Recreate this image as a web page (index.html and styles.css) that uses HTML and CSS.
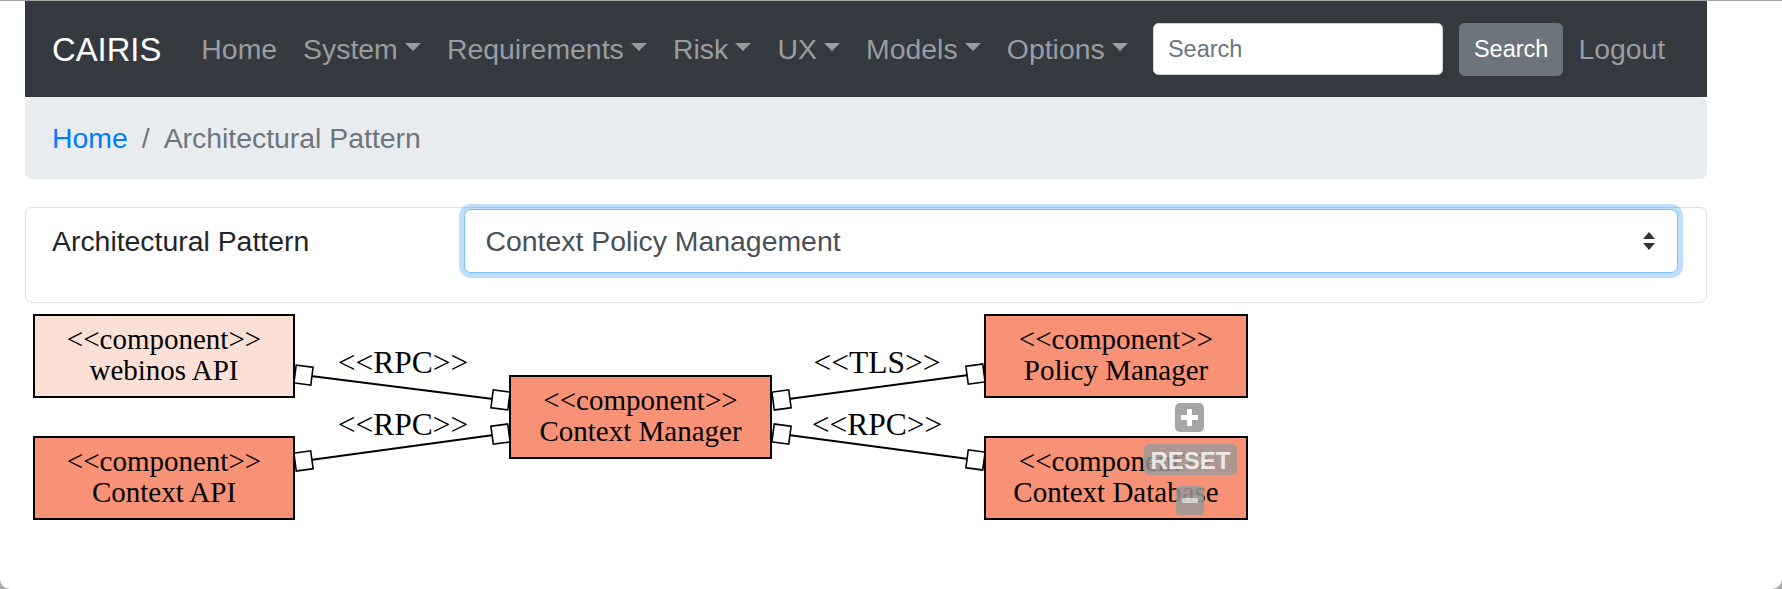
FILE: index.html
```html
<!DOCTYPE html>
<html lang="en">
<head>
<meta charset="utf-8">
<title>CAIRIS - Architectural Pattern</title>
<link rel="stylesheet" href="styles.css">
</head>
<body>
<div class="page">
  <nav class="navbar">
    <a class="brand">CAIRIS</a>
    <ul class="nav">
      <li class="nav-link">Home</li>
      <li class="nav-link dropdown">System</li>
      <li class="nav-link dropdown">Requirements</li>
      <li class="nav-link dropdown">Risk</li>
      <li class="nav-link dropdown">UX</li>
      <li class="nav-link dropdown">Models</li>
      <li class="nav-link dropdown">Options</li>
    </ul>
    <form class="search">
      <input class="search-input" type="text" placeholder="Search">
      <button class="btn" type="button">Search</button>
    </form>
    <a class="nav-link logout">Logout</a>
  </nav>

  <ol class="breadcrumb">
    <li class="crumb"><a class="crumb-link">Home</a></li>
    <li class="crumb active">Architectural Pattern</li>
  </ol>

  <div class="card">
    <label class="field-label">Architectural Pattern</label>
    <div class="select-wrap">
      <select class="select">
        <option>Context Policy Management</option>
      </select>
      <svg class="select-arrow" width="14" height="18" viewBox="0 0 14 18">
        <path d="M7 0 L13 7 L1 7 Z" fill="#333"/>
        <path d="M1 11 L13 11 L7 18 Z" fill="#333"/>
      </svg>
    </div>
  </div>

  <svg class="diagram" width="1250" height="240" viewBox="0 0 1250 240">
    <g class="edges" stroke="#000" stroke-width="2" fill="none">
      <line x1="278" y1="71" x2="476" y2="96"/>
      <line x1="278" y1="157" x2="476" y2="130"/>
      <line x1="756" y1="96" x2="951" y2="70"/>
      <line x1="756" y1="130" x2="951" y2="156"/>
    </g>
    <g class="labels" font-family="'Liberation Serif', 'Times New Roman', serif" font-size="31.5" text-anchor="middle" fill="#000">
      <text x="378" y="69">&lt;&lt;RPC&gt;&gt;</text>
      <text x="378" y="131">&lt;&lt;RPC&gt;&gt;</text>
      <text x="852" y="69">&lt;&lt;TLS&gt;&gt;</text>
      <text x="852" y="131">&lt;&lt;RPC&gt;&gt;</text>
    </g>
    <g class="nodes" stroke="#000" stroke-width="2">
      <rect x="9" y="11" width="260" height="82" fill="#fde0d5"/>
      <rect x="9" y="133" width="260" height="82" fill="#f89276"/>
      <rect x="485" y="72" width="261" height="82" fill="#f89276"/>
      <rect x="960" y="11" width="262" height="82" fill="#f89276"/>
      <rect x="960" y="133" width="262" height="82" fill="#f89276"/>
    </g>
    <g class="ports" fill="#fff" stroke="#000" stroke-width="1.6">
      <rect x="-8" y="-9" width="17" height="18" transform="translate(278 71) rotate(7.2)"/>
      <rect x="-8" y="-9" width="17" height="18" transform="translate(278 157) rotate(-7.8)"/>
      <rect x="-9" y="-9" width="17" height="18" transform="translate(476 96) rotate(7.2)"/>
      <rect x="-9" y="-9" width="17" height="18" transform="translate(476 130) rotate(-7.8)"/>
      <rect x="-8" y="-9" width="17" height="18" transform="translate(756 96) rotate(-7.6)"/>
      <rect x="-8" y="-9" width="17" height="18" transform="translate(756 130) rotate(7.6)"/>
      <rect x="-9" y="-9" width="17" height="18" transform="translate(951 70) rotate(-7.6)"/>
      <rect x="-9" y="-9" width="17" height="18" transform="translate(951 156) rotate(7.6)"/>
    </g>
    <g class="node-text" font-family="'Liberation Serif', 'Times New Roman', serif" font-size="29" text-anchor="middle" fill="#000">
      <text x="139" y="45">&lt;&lt;component&gt;&gt;</text>
      <text x="139" y="76">webinos API</text>
      <text x="139" y="167">&lt;&lt;component&gt;&gt;</text>
      <text x="139" y="198">Context API</text>
      <text x="615.5" y="106">&lt;&lt;component&gt;&gt;</text>
      <text x="615.5" y="137">Context Manager</text>
      <text x="1091" y="45">&lt;&lt;component&gt;&gt;</text>
      <text x="1091" y="76">Policy Manager</text>
      <text x="1091" y="167">&lt;&lt;component&gt;&gt;</text>
      <text x="1091" y="198">Context Database</text>
    </g>
    <g class="controls">
      <rect x="1150" y="99" width="29" height="29" rx="5" fill="#a6a6a6"/>
      <path d="M1164.5 105 V122 M1156 113.5 H1173" stroke="#fff" stroke-width="5"/>
      <rect x="1119" y="140" width="93" height="31" rx="5" fill="#999" fill-opacity="0.8"/>
      <text x="1165.5" y="165" text-anchor="middle" font-family="'Liberation Sans', Arial, sans-serif" font-weight="bold" font-size="24" fill="#fff" fill-opacity="0.8">RESET</text>
      <rect x="1151" y="182" width="28" height="29" rx="4" fill="#999" fill-opacity="0.85"/>
      <rect x="1157" y="194" width="16" height="5" rx="1.5" fill="#fff" fill-opacity="0.6"/>
    </g>
  </svg>
</div>
</body>
</html>
```

FILE: styles.css
```css
html {
  background: #a8a8a8;
}

body {
  margin: 0;
  min-height: 100vh;
  box-sizing: border-box;
  border-top: 1px solid #a3a3a3;
  border-radius: 0 0 10px 10px;
  background: #fff;
  font-family: "Liberation Sans", Arial, Helvetica, sans-serif;
  font-size: 28.4px;
  line-height: 41px;
  color: #212529;
}

.page {
  width: 1682px;
  margin-left: 25px;
}

/* Navbar */
.navbar {
  display: flex;
  align-items: center;
  height: 96px;
  padding: 0 27px;
  background: #343a40;
}

.brand {
  font-size: 32.8px;
  color: #fff;
  margin-right: 27px;
}

.nav {
  display: flex;
  list-style: none;
  margin: 0;
  padding: 0;
}

.nav-link {
  padding: 0 13px;
  color: #9a9da0;
}

.dropdown::after {
  content: "";
  display: inline-block;
  margin-left: 0.255em;
  vertical-align: 0.255em;
  border-top: 0.3em solid;
  border-right: 0.3em solid transparent;
  border-left: 0.3em solid transparent;
}

.search {
  display: flex;
  align-items: center;
  margin: 0 0 0 12px;
}

.search-input {
  width: 290px;
  height: 52px;
  box-sizing: border-box;
  padding: 0 14px;
  font-family: "Liberation Sans", Arial, sans-serif;
  font-size: 23.5px;
  color: #495057;
  background: #fff;
  border: 1px solid #ced4da;
  border-radius: 5.5px;
}

.search-input::placeholder {
  color: #6c757d;
}

.btn {
  margin-left: 16px;
  height: 53px;
  padding: 0 14px;
  font-family: "Liberation Sans", Arial, sans-serif;
  font-size: 23.5px;
  color: #fff;
  background: #6c757d;
  border: 1px solid #6c757d;
  border-radius: 5.5px;
}

.logout {
  margin-left: 2px;
}

/* Breadcrumb */
.breadcrumb {
  display: flex;
  list-style: none;
  margin: 0;
  padding: 20.5px 27px;
  background: #e9ecef;
  border-radius: 7px;
}

.crumb-link {
  color: #007bff;
}

.crumb + .crumb {
  padding-left: 14px;
}

.crumb + .crumb::before {
  content: "/";
  padding-right: 14px;
  color: #6c757d;
}

.crumb.active {
  color: #6c757d;
}

/* Card */
.card {
  display: grid;
  grid-template-columns: 412px 1fr;
  align-items: center;
  margin-top: 28px;
  padding: 1px 28px 29px 26px;
  border: 1px solid rgba(0, 0, 0, 0.125);
  border-radius: 7px;
}

.field-label {
  color: #212529;
}

.select-wrap {
  position: relative;
}

.select {
  display: block;
  width: 100%;
  height: 64px;
  box-sizing: border-box;
  padding: 0 20.5px;
  font-family: "Liberation Sans", Arial, sans-serif;
  font-size: 28.4px;
  color: #495057;
  background: #fff;
  border: 1px solid #80bdff;
  border-radius: 7px;
  box-shadow: 0 0 0 5px rgba(0, 123, 255, 0.25);
  appearance: none;
  -webkit-appearance: none;
  outline: none;
}

.select-arrow {
  position: absolute;
  right: 22px;
  top: 23px;
}

/* Diagram */
.diagram {
  display: block;
  margin-top: 1px;
}
```
